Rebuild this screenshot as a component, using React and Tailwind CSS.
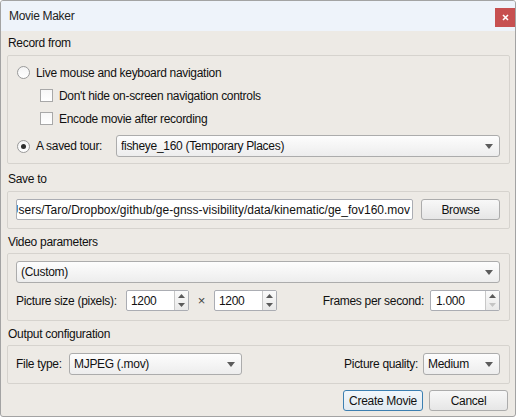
import React from "react";

function Arrow({ up = false, color = "#5a5a5a" }) {
  return (
    <svg width="7" height="4" viewBox="0 0 7 4">
      {up ? <path d="M3.5 0L7 4H0Z" fill={color} /> : <path d="M0 0H7L3.5 4Z" fill={color} />}
    </svg>
  );
}

function Combo({ children, className = "" }) {
  return (
    <div
      className={`flex items-center h-[22px] border border-[#acacac] rounded-[3px] bg-linear-to-b from-[#fdfdfd] to-[#ededed] pl-[4px] pr-[6px] ${className}`}
    >
      <span className="flex-1 whitespace-nowrap overflow-hidden">{children}</span>
      <svg width="8" height="5" viewBox="0 0 8 5">
        <path d="M0 0H8L4 5Z" fill="#5c5c5c" />
      </svg>
    </div>
  );
}

function Spin({ value, className = "", downDisabled = false, pl = "pl-[4px]" }) {
  return (
    <div className={`flex h-[21px] border border-[#abadb3] bg-white rounded-[2px] ${className}`}>
      <span className={`flex-1 flex items-center ${pl}`}>{value}</span>
      <div className="w-[14px] flex flex-col border-l border-[#c8c8c8] bg-linear-to-b from-[#fafafa] to-[#e9e9e9]">
        <div className="flex-1 flex items-center justify-center pt-[1px]">
          <Arrow up color="#5a5a5a" />
        </div>
        <div className="flex-1 flex items-center justify-center pb-[1px]">
          <Arrow color={downDisabled ? "#c4c4c4" : "#5a5a5a"} />
        </div>
      </div>
    </div>
  );
}

function Radio({ checked }) {
  return (
    <div className="w-[13px] h-[13px] rounded-full border border-[#9a9a9a] bg-linear-to-b from-[#f4f4f4] to-[#ffffff] flex items-center justify-center shrink-0">
      {checked && <div className="w-[5px] h-[5px] rounded-full bg-[#2e2e2e]" />}
    </div>
  );
}

function Check() {
  return (
    <div className="w-[13px] h-[13px] border border-[#a8a8a8] bg-linear-to-b from-[#f7f7f7] to-[#ffffff] shrink-0" />
  );
}

function Button({ children, className = "", primary = false }) {
  return (
    <div
      className={`flex items-center justify-center h-[21px] rounded-[3px] border ${
        primary
          ? "border-[#3c7fb1] bg-linear-to-b from-[#f2f7fb] to-[#e1e9f0]"
          : "border-[#acacac] bg-linear-to-b from-[#f8f8f8] to-[#e6e6e6]"
      } ${className}`}
    >
      {children}
    </div>
  );
}

function Label({ children, className = "" }) {
  return <div className={`h-[14px] leading-[14px] pl-[7px] ${className}`}>{children}</div>;
}

export default function App() {
  return (
    <div className="w-[516px] h-[417px] overflow-hidden bg-white">
      <div className="w-[516px] h-[417px] border border-[#a3a3a3] rounded-[3px] bg-[#edeae5] flex flex-col text-[12px] tracking-[-0.3px] text-[#111] font-['Liberation_Sans','Noto_Sans_CJK_JP',sans-serif] overflow-hidden">
        {/* Title bar */}
        <div className="h-[30px] bg-[#eef3fa] flex justify-between shrink-0">
          <div className="pl-[8px] flex items-center text-[12px] text-[#222]">Movie Maker</div>
          <div className="mt-[7px] mr-[0px] w-[20px] h-[19px] bg-[#c75050] flex items-center justify-center">
            <svg width="7" height="7" viewBox="0 0 7 7">
              <path d="M1 1L6 6M6 1L1 6" stroke="#fff" strokeWidth="1.6" />
            </svg>
          </div>
        </div>

        {/* Body */}
        <div className="flex flex-col">
          <Label className="mt-[5px]">Record from</Label>
          <div className="mt-[5px] ml-[6px] mr-[5px] h-[109px] border border-[#d6d3ce] rounded-[2px] flex flex-col pt-[5px]">
            <div className="h-[23px] flex items-center pl-[9px] gap-[6px]">
              <Radio />
              <span>Live mouse and keyboard navigation</span>
            </div>
            <div className="h-[23px] flex items-center pl-[32px] gap-[6px]">
              <Check />
              <span>Don't hide on-screen navigation controls</span>
            </div>
            <div className="h-[23px] flex items-center pl-[32px] gap-[6px]">
              <Check />
              <span>Encode movie after recording</span>
            </div>
            <div className="mt-[5px] h-[22px] flex items-center pl-[9px] pr-[9px]">
              <Radio checked />
              <span className="ml-[6px] w-[80px]">A saved tour:</span>
              <Combo className="flex-1">fisheye_160 (Temporary Places)</Combo>
            </div>
          </div>

          <Label className="mt-[8px]">Save to</Label>
          <div className="mt-[5px] ml-[6px] mr-[5px] h-[38px] border border-[#d6d3ce] rounded-[2px] flex items-start pt-[7px] pl-[8px] pr-[9px] gap-[8px]">
            <div className="w-[397px] h-[21px] border border-[#abadb3] bg-white rounded-[2px] flex items-center justify-end overflow-hidden whitespace-nowrap pr-[2px]">
              <span className="tracking-normal">C:/Users/Taro/Dropbox/github/ge-gnss-visibility/data/kinematic/ge_fov160.mov</span>
            </div>
            <Button className="flex-1 h-[20px]">Browse</Button>
          </div>

          <Label className="mt-[6px]">Video parameters</Label>
          <div className="mt-[4px] ml-[6px] mr-[5px] h-[68px] border border-[#d6d3ce] rounded-[2px] flex flex-col pt-[7px] pl-[8px] pr-[9px]">
            <Combo>(Custom)</Combo>
            <div className="mt-[7px] h-[21px] flex items-center">
              <span className="w-[110px]">Picture size (pixels):</span>
              <Spin value="1200" className="w-[63px]" />
              <span className="w-[25px] text-center text-[#444] text-[13px]">×</span>
              <Spin value="1200" className="w-[63px]" />
              <span className="flex-1 text-right pr-[6px]">Frames per second:</span>
              <Spin value="1.000" className="w-[70px]" downDisabled pl="pl-[5px]" />
            </div>
          </div>

          <Label className="mt-[6px]">Output configuration</Label>
          <div className="mt-[4px] ml-[6px] mr-[5px] h-[39px] border border-[#d6d3ce] rounded-[2px] flex items-start pt-[7px] pl-[8px] pr-[9px]">
            <div className="h-[22px] flex items-center w-[53px]">File type:</div>
            <Combo className="w-[173px]">MJPEG (.mov)</Combo>
            <div className="flex-1 h-[22px] flex items-center justify-end pr-[5px]">Picture quality:</div>
            <Combo className="w-[77px]">Medium</Combo>
          </div>

          <div className="mt-[6px] flex justify-end gap-[6px] pr-[7px]">
            <Button primary className="w-[80px]">Create Movie</Button>
            <Button className="w-[79px]">Cancel</Button>
          </div>
        </div>
      </div>
    </div>
  );
}
